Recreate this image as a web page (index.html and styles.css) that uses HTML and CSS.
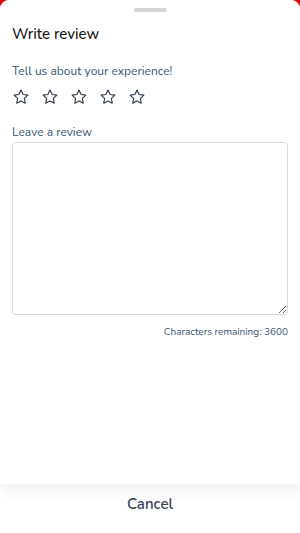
FILE: index.html
```html
<!DOCTYPE html>
<html>
<head>
<meta charset="utf-8">
<link rel="stylesheet" href="styles.css">
</head>
<body>
<div class="sheet">
  <div class="main">
    <div class="handle"></div>
    <h1 class="title">Write review</h1>
    <p class="prompt">Tell us about your experience!</p>
    <div class="stars">
      <svg class="star" viewBox="0 0 24 24"><path d="M12 2.8l2.8 5.9 6.4.8-4.7 4.4 1.2 6.4L12 17.2l-5.7 3.1 1.2-6.4L2.8 9.5l6.4-.8z"/></svg>
      <svg class="star" viewBox="0 0 24 24"><path d="M12 2.8l2.8 5.9 6.4.8-4.7 4.4 1.2 6.4L12 17.2l-5.7 3.1 1.2-6.4L2.8 9.5l6.4-.8z"/></svg>
      <svg class="star" viewBox="0 0 24 24"><path d="M12 2.8l2.8 5.9 6.4.8-4.7 4.4 1.2 6.4L12 17.2l-5.7 3.1 1.2-6.4L2.8 9.5l6.4-.8z"/></svg>
      <svg class="star" viewBox="0 0 24 24"><path d="M12 2.8l2.8 5.9 6.4.8-4.7 4.4 1.2 6.4L12 17.2l-5.7 3.1 1.2-6.4L2.8 9.5l6.4-.8z"/></svg>
      <svg class="star" viewBox="0 0 24 24"><path d="M12 2.8l2.8 5.9 6.4.8-4.7 4.4 1.2 6.4L12 17.2l-5.7 3.1 1.2-6.4L2.8 9.5l6.4-.8z"/></svg>
    </div>
    <label class="label" for="review">Leave a review</label>
    <textarea id="review" class="review"></textarea>
    <p class="counter">Characters remaining: 3600</p>
  </div>
  <div class="footer">
    <button class="cancel">Cancel</button>
  </div>
</div>
</body>
</html>
```
FILE: styles.css
```css
* { box-sizing: border-box; }
html, body {
  margin: 0;
  padding: 0;
  height: 100%;
}
body {
  background: #e4080a;
  font-family: "Nunito", "Lato", "Noto Sans", sans-serif;
}
.sheet {
  height: 533px;
  background: #fff;
  border-radius: 9px 9px 0 0;
  display: flex;
  flex-direction: column;
  overflow: hidden;
}
.main {
  height: 484px;
  padding: 8px 12px 0;
  display: flex;
  flex-direction: column;
  background: #fff;
  box-shadow: 0 6px 14px rgba(0, 0, 0, 0.07);
  position: relative;
  z-index: 1;
}
.handle {
  width: 33px;
  height: 4px;
  border-radius: 2px;
  background: #d4d4d6;
  align-self: center;
}
.title {
  margin: 12px 0 0;
  font-size: 15px;
  font-weight: 500;
  color: #111;
  line-height: 20px;
}
.prompt {
  margin: 19px 0 0;
  font-size: 12px;
  line-height: 16px;
  color: #3a5472;
}
.stars {
  display: flex;
  gap: 11px;
  margin-top: 9px;
}
.star {
  width: 18px;
  height: 18px;
  fill: none;
  stroke: #2f3a48;
  stroke-width: 1.5;
  stroke-linejoin: round;
}
.label {
  margin-top: 18px;
  font-size: 12px;
  line-height: 16px;
  color: #3a5472;
}
.review {
  margin-top: 2px;
  height: 173px;
  width: 100%;
  border: 1px solid #d6dae0;
  border-radius: 4px;
  resize: vertical;
  font-family: inherit;
}
.counter {
  margin: 10px 0 0;
  text-align: right;
  font-size: 10px;
  line-height: 14px;
  color: #3a5472;
}
.footer {
  flex: 1;
  display: flex;
  justify-content: center;
  align-items: flex-start;
  background: #fff;
}
.cancel {
  margin-top: 10px;
  background: none;
  border: none;
  font-family: inherit;
  font-size: 15px;
  font-weight: 600;
  color: #3b4552;
  padding: 0;
}
```
